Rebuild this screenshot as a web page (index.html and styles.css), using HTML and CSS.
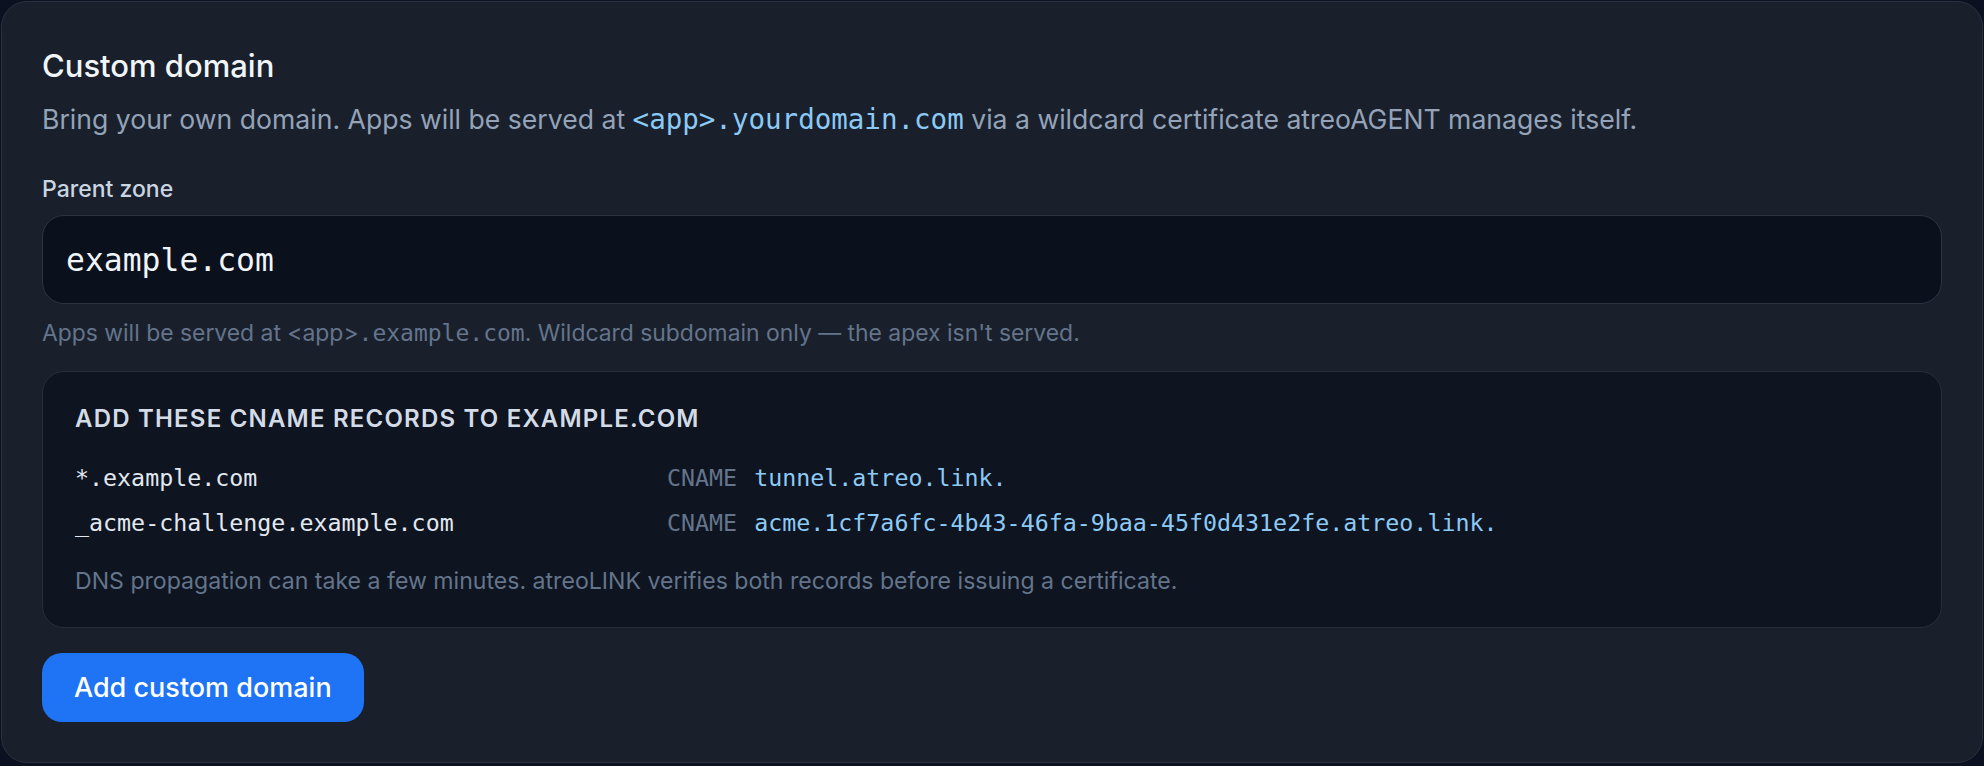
FILE: index.html
```html
<!DOCTYPE html>
<html lang="en">
<head>
    <meta charset="UTF-8">
    <meta name="viewport" content="width=device-width, initial-scale=1.0">
    <title>Custom domain</title>
    <link rel="stylesheet" href="styles.css">
</head>
<body>
    <section class="card">
        <h2 class="card-title">Custom domain</h2>
        <p class="card-desc">Bring your own domain. Apps will be served at <code class="hl">&lt;app&gt;.yourdomain.com</code> via a wildcard certificate atreoAGENT manages itself.</p>

        <label class="field-label" for="zone">Parent zone</label>
        <input class="field-input" id="zone" type="text" value="example.com">
        <p class="field-hint">Apps will be served at &lt;app&gt;<code>.example.com</code>. Wildcard subdomain only — the apex isn't served.</p>

        <div class="records">
            <h3 class="records-title">Add these CNAME records to example.com</h3>
            <div class="records-grid">
                <span class="rec-name">*.example.com</span>
                <span class="rec-type">CNAME</span>
                <span class="rec-value">tunnel.atreo.link.</span>

                <span class="rec-name">_acme-challenge.example.com</span>
                <span class="rec-type">CNAME</span>
                <span class="rec-value">acme.1cf7a6fc-4b43-46fa-9baa-45f0d431e2fe.atreo.link.</span>
            </div>
            <p class="records-note">DNS propagation can take a few minutes. atreoLINK verifies both records before issuing a certificate.</p>
        </div>

        <button class="btn-primary" type="button">Add custom domain</button>
    </section>
</body>
</html>
```

FILE: styles.css
```css
body {
    margin: 0;
    padding: 1px 1px 2px;
    background: #0b1120;
    font-family: 'Inter', 'Noto Sans', sans-serif;
}
code, .field-input, .records-grid {
    font-family: 'DejaVu Sans Mono', 'Liberation Mono', monospace;
}
.card {
    background: #19202c;
    border: 1px solid #2b323e;
    border-radius: 26px;
    padding: 45px 40px 40px;
}
.card-title {
    margin: 0;
    font-size: 31px;
    line-height: 38px;
    font-weight: 500;
    color: #f1f5f9;
}
.card-desc {
    margin: 17px 0 0;
    font-size: 26.6px;
    line-height: 34px;
    color: #94a3b8;
}
.card-desc .hl {
    font-size: 27.5px;
    color: #8ccaf5;
}
.field-label {
    display: block;
    margin-top: 40px;
    font-size: 23px;
    line-height: 26px;
    font-weight: 500;
    color: #cbd5e1;
}
.field-input {
    display: block;
    box-sizing: border-box;
    width: 100%;
    height: 89px;
    margin-top: 13px;
    padding: 0 23px;
    background: #0a101c;
    border: 1px solid #2c3442;
    border-radius: 22px;
    color: #f1f5f9;
    font-size: 31.4px;
    outline: none;
}
.field-hint {
    margin: 15px 0 0;
    font-size: 22.9px;
    line-height: 28px;
    color: #64748b;
}
.field-hint code {
    font-size: 23px;
}
.records {
    margin-top: 24px;
    padding: 33px 32px 32px;
    background: #0e1420;
    border: 1px solid #262e3b;
    border-radius: 22px;
}
.records-title {
    margin: 0;
    font-size: 24px;
    line-height: 28px;
    font-weight: 600;
    letter-spacing: 0.05em;
    text-transform: uppercase;
    color: #d3dbe6;
}
.records-grid {
    display: grid;
    grid-template-columns: 575px auto 1fr;
    column-gap: 17px;
    row-gap: 15px;
    margin-top: 30px;
    font-size: 23.3px;
    line-height: 30px;
}
.rec-name {
    color: #e2e8f0;
}
.rec-type {
    color: #64748b;
}
.rec-value {
    color: #8ccaf5;
}
.records-note {
    margin: 29px 0 0;
    font-size: 23.1px;
    line-height: 28px;
    color: #64748b;
}
.btn-primary {
    margin-top: 25px;
    height: 69px;
    padding: 0 32px;
    background: #1e74f5;
    border: none;
    border-radius: 20px;
    color: #fff;
    font-family: inherit;
    font-size: 27px;
    font-weight: 500;
    cursor: pointer;
}
.btn-primary:hover {
    background: #1663d8;
}
```
